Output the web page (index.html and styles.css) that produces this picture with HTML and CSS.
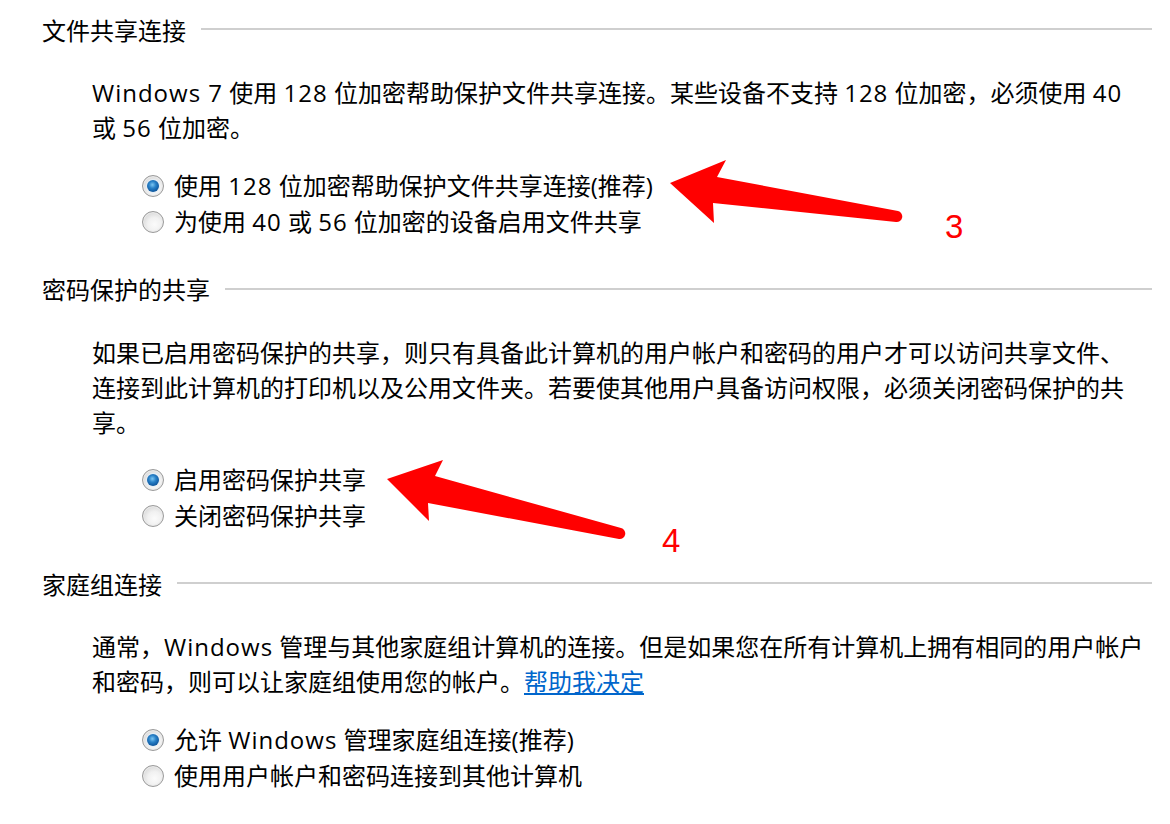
FILE: index.html
```html
<!DOCTYPE html>
<html lang="zh-CN">
<head>
<meta charset="utf-8">
<title>高级共享设置</title>
<link rel="stylesheet" href="styles.css">
</head>
<body>
<div class="page">
  <section class="group">
    <div class="heading"><span class="heading-text">文件共享连接</span><span class="rule"></span></div>
    <p class="desc"><span class="lat">Windows 7</span> 使用 <span class="lat">128</span> 位加密帮助保护文件共享连接。某些设备不支持 <span class="lat">128</span> 位加密，必须使用 <span class="lat">40</span><br>或 <span class="lat">56</span> 位加密。</p>
    <div class="options">
      <div class="option"><span class="radio checked"></span><span>使用 <span class="lat">128</span> 位加密帮助保护文件共享连接(推荐)</span></div>
      <div class="option"><span class="radio"></span><span>为使用 <span class="lat">40</span> 或 <span class="lat">56</span> 位加密的设备启用文件共享</span></div>
    </div>
  </section>
  <section class="group">
    <div class="heading"><span class="heading-text">密码保护的共享</span><span class="rule"></span></div>
    <p class="desc">如果已启用密码保护的共享，则只有具备此计算机的用户帐户和密码的用户才可以访问共享文件、<br>连接到此计算机的打印机以及公用文件夹。若要使其他用户具备访问权限，必须关闭密码保护的共<br>享。</p>
    <div class="options">
      <div class="option"><span class="radio checked"></span><span>启用密码保护共享</span></div>
      <div class="option"><span class="radio"></span><span>关闭密码保护共享</span></div>
    </div>
  </section>
  <section class="group">
    <div class="heading"><span class="heading-text">家庭组连接</span><span class="rule"></span></div>
    <p class="desc">通常，<span class="lat">Windows</span> 管理与其他家庭组计算机的连接。但是如果您在所有计算机上拥有相同的用户帐户<br>和密码，则可以让家庭组使用您的帐户。<a class="link" href="#">帮助我决定</a></p>
    <div class="options">
      <div class="option"><span class="radio checked"></span><span>允许 <span class="lat">Windows</span> 管理家庭组连接(推荐)</span></div>
      <div class="option"><span class="radio"></span><span>使用用户帐户和密码连接到其他计算机</span></div>
    </div>
  </section>
  <svg class="annotations" width="1170" height="824" viewBox="0 0 1170 824">
    <path d="M670,183 L726,160 L717,177 L898,211 A5.6,5.6 0 0 1 896,222 L713,203 L714,223 Z" fill="#ff0000"/>
    <text x="945" y="238" class="num">3</text>
    <path d="M387,479 L443,460 L435,476 L621,528 A5.6,5.6 0 0 1 619,539 L428,503 L429,521 Z" fill="#ff0000"/>
    <text x="662" y="552" class="num">4</text>
  </svg>
</div>
</body>
</html>
```
FILE: styles.css
```css
html, body {
  margin: 0;
  padding: 0;
  background: #ffffff;
}
body {
  font-family: "Open Sans", "Noto Sans CJK SC", sans-serif;
  font-size: 24px;
  color: #000000;
}
.page {
  position: relative;
  width: 1170px;
  height: 824px;
  overflow: hidden;
  padding-top: 11px;
  box-sizing: border-box;
}
.group {
  padding-bottom: 32.5px;
}
.heading {
  display: flex;
  align-items: center;
  height: 36px;
  padding-left: 42px;
  padding-right: 18px;
}
.heading-text {
  white-space: nowrap;
}
.rule {
  flex: 1;
  height: 0;
  border-top: 2px solid #cfcfcf;
  margin-left: 15px;
}
.desc {
  margin: 28px 0 0 92px;
  line-height: 35px;
  white-space: nowrap;
}
.lat {
  letter-spacing: 1px;
}
.link {
  color: #0066cc;
  text-decoration: underline;
}
.options {
  margin: 21px 0 0 142px;
}
.option {
  display: flex;
  align-items: center;
  gap: 10px;
  height: 36px;
  white-space: nowrap;
}
.radio {
  position: relative;
  flex: none;
  width: 20px;
  height: 20px;
  margin-top: 3px;
  border-radius: 50%;
  border: 1px solid #9a9a9a;
  background: radial-gradient(circle at 58% 62%, #fbfbfb 0, #f1f1f1 40%, #dcdcdc 70%, #c4c4c4 100%);
  box-shadow: inset 0 0 0 1px #ebebeb;
}
.radio.checked::after {
  content: "";
  position: absolute;
  left: 4px;
  top: 4px;
  width: 12px;
  height: 12px;
  border-radius: 50%;
  background: radial-gradient(circle at 45% 40%, #7cc6f2 0, #2a82c8 35%, #125ea6 65%, #0a3c70 100%);
  box-shadow: 0 0 0 1px #e4eef6;
}
.annotations {
  position: absolute;
  left: 0;
  top: 0;
}
.num {
  font-family: "Liberation Sans", sans-serif;
  font-size: 33px;
  fill: #ff0000;
}
```
